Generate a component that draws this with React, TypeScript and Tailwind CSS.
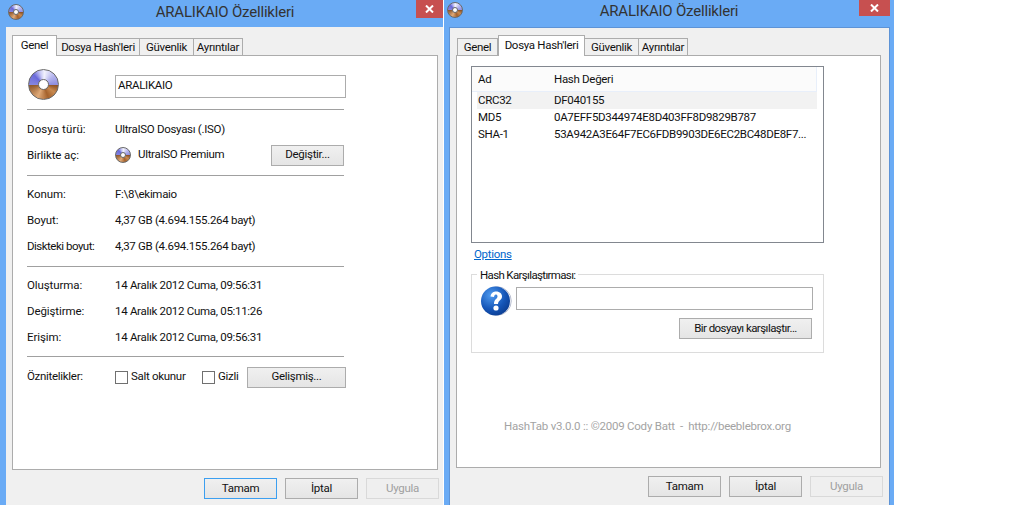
import React from "react";

function Disc({ size }: { size: number }) {
  const hole = Math.round(size * 0.36);
  return (
    <div
      className="rounded-full flex items-center justify-center shrink-0 border border-[#6a6a6a] bg-[conic-gradient(from_-90deg,#8585e0_0deg,#6a6ada_45deg,#c9c9f5_75deg,#f2f2fd_95deg,#b4b4ee_140deg,#8f8fe0_180deg,#8a4f22_182deg,#c98a50_215deg,#a5622c_250deg,#e0aa78_295deg,#8a5428_360deg)]"
      style={{ width: size, height: size }}
    >
      <div className="rounded-full bg-white border border-[#666]" style={{ width: hole, height: hole }} />
    </div>
  );
}

function CloseGlyph() {
  return (
    <svg width="9" height="8" viewBox="0 0 9 8">
      <path d="M1 0.5 L8 7.5 M8 0.5 L1 7.5" stroke="#fff" strokeWidth="2" />
    </svg>
  );
}

function Tab({ w, active, children }: { w: number; active?: boolean; children: React.ReactNode }) {
  return active ? (
    <div
      className="h-[21px] bg-white border border-b-0 border-[#acacac] flex items-center justify-center relative z-10 -mb-px shrink-0 whitespace-nowrap"
      style={{ width: w }}
    >
      {children}
    </div>
  ) : (
    <div
      className="h-[18px] mt-[3px] bg-[#f0f0f0] border border-[#acacac] -ml-px flex items-center justify-center shrink-0 whitespace-nowrap pt-px"
      style={{ width: w }}
    >
      {children}
    </div>
  );
}

function Btn({ w, children, variant }: { w: number; children: React.ReactNode; variant?: "focus" | "off" }) {
  const cls =
    variant === "focus"
      ? "border-[#3c9ff0] bg-gradient-to-b from-[#f0f0f0] to-[#e5e5e5]"
      : variant === "off"
      ? "border-[#d9d9d9] bg-[#efefef] text-[#a0a0a0]"
      : "border-[#acacac] bg-gradient-to-b from-[#f0f0f0] to-[#e5e5e5]";
  return (
    <div className={`h-[21px] border flex items-center justify-center shrink-0 whitespace-nowrap ${cls}`} style={{ width: w }}>
      {children}
    </div>
  );
}

function Hr({ mt }: { mt: string }) {
  return <div className={`h-px w-[317px] bg-[#a0a0a0] ${mt}`} />;
}

function Row({ label, children, mt, labelCls }: { label: string; children: React.ReactNode; mt?: string; labelCls?: string }) {
  return (
    <div className={`h-[26px] flex items-center whitespace-nowrap ${mt ?? ""}`}>
      <div className={`w-[88px] shrink-0 ${labelCls ?? "pt-px tracking-[-0.1px]"}`}>{label}</div>
      {children}
    </div>
  );
}

function Checkbox() {
  return <div className="w-[13px] h-[13px] border border-[#707070] bg-white shrink-0" />;
}

function Question() {
  return (
    <svg width="31" height="30" viewBox="0 0 31 30" className="shrink-0">
      <defs>
        <radialGradient id="q" cx="0.35" cy="0.3" r="0.8">
          <stop offset="0" stopColor="#4f9bf0" />
          <stop offset="0.6" stopColor="#1556b8" />
          <stop offset="1" stopColor="#0a3a8c" />
        </radialGradient>
      </defs>
      <circle cx="16" cy="15" r="14.3" fill="#f4f6fa" stroke="#b9bfd0" />
      <circle cx="14.5" cy="15" r="14.5" fill="url(#q)" />
      <path
        d="M9.5 10.5 C10 6.5 13 5.5 15 5.5 C19 5.5 21 8 21 10.5 C21 14 17 14.5 17 18 H13 C13 13 16.5 13 16.5 10.5 C16.5 9 15.5 8.5 14.8 8.5 C13.8 8.5 13.2 9.5 13 11 Z"
        fill="#fff"
      />
      <circle cx="15" cy="22" r="2.6" fill="#fff" />
    </svg>
  );
}

function GeneralPanel() {
  return (
    <div className="h-[415px] mr-[5px] bg-white border border-[#acacac] pl-[14px] pt-[13px]">
      <div className="h-[31px] flex">
        <div className="w-[88px] pl-px shrink-0">
          <Disc size={31} />
        </div>
        <div className="w-[231px] h-[23px] mt-[6px] border border-[#acacac] flex items-center pl-[2px] pb-[2px]">ARALIKAIO</div>
      </div>
      <Hr mt="mt-[9px]" />
      <Row label="Dosya türü:" mt="mt-[6px]" labelCls="pt-px tracking-[0.1px]">
        <span className="pt-px">UltraISO Dosyası (.ISO)</span>
      </Row>
      <Row label="Birlikte aç:">
        <div className="flex items-center gap-[7px] w-[156px]">
          <Disc size={16} />
          <span>UltraISO Premium</span>
        </div>
        <Btn w={73}>Değiştir...</Btn>
      </Row>
      <Hr mt="mt-[7px]" />
      <Row label="Konum:" mt="mt-[5px]">
        <span className="pt-px">F:\8\ekimaio</span>
      </Row>
      <Row label="Boyut:">
        <span className="pt-px">4,37 GB (4.694.155.264 bayt)</span>
      </Row>
      <Row label="Diskteki boyut:" labelCls="pt-px tracking-[-0.5px]">
        <span className="pt-px">4,37 GB (4.694.155.264 bayt)</span>
      </Row>
      <Hr mt="mt-[7px]" />
      <Row label="Oluşturma:" mt="mt-[5px]">
        <span className="pt-px">14 Aralık 2012 Cuma, 09:56:31</span>
      </Row>
      <Row label="Değiştirme:">
        <span className="pt-px">14 Aralık 2012 Cuma, 05:11:26</span>
      </Row>
      <Row label="Erişim:">
        <span className="pt-px">14 Aralık 2012 Cuma, 09:56:31</span>
      </Row>
      <Hr mt="mt-[6px]" />
      <Row label="Öznitelikler:" mt="mt-[7px]" labelCls="pb-px tracking-[-0.3px]">
        <Checkbox />
        <span className="ml-[3px] w-[71px]">Salt okunur</span>
        <Checkbox />
        <span className="ml-[3px] w-[29px]">Gizli</span>
        <Btn w={99}>Gelişmiş...</Btn>
      </Row>
    </div>
  );
}

function HashPanel() {
  return (
    <div className="h-[413px] bg-white border border-[#acacac] pl-[14px] pt-[10px]">
      <div className="w-[353px] h-[177px] border border-[#82878f] whitespace-nowrap">
        <div className="h-[25px] mr-[6px] bg-[#fbfbfb] border-b border-r border-[#e8effa] flex items-center pl-[6px] pt-[2px]">
          <span className="w-[76px] shrink-0">Ad</span>
          <span>Hash Değeri</span>
        </div>
        <div className="h-[17px] ml-[5px] mr-[6px] bg-[#f2f2f2] flex items-center pl-px pt-px">
          <span className="w-[76px] shrink-0">CRC32</span>
          <span>DF040155</span>
        </div>
        <div className="h-[17px] flex items-center pl-[6px] pt-px">
          <span className="w-[76px] shrink-0">MD5</span>
          <span>0A7EFF5D344974E8D403FF8D9829B787</span>
        </div>
        <div className="h-[17px] flex items-center pl-[6px] pt-px">
          <span className="w-[76px] shrink-0">SHA-1</span>
          <span>53A942A3E64F7EC6FDB9903DE6EC2BC48DE8F7...</span>
        </div>
      </div>
      <div className="mt-[3px] ml-[3px] h-[16px] leading-[16px] text-[#0066cc] underline">Options</div>
      <div className="mt-[12px] w-[353px] h-[79px] border border-[#dcdcdc] relative pt-[11px] pl-[9px]">
        <span className="absolute left-[5px] -top-[7px] bg-white px-[3px] leading-[14px] whitespace-nowrap tracking-[-0.65px]">Hash Karşılaştırması:</span>
        <div className="flex">
          <Question />
          <div className="ml-[4px] mt-px w-[297px] h-[23px] border border-[#acacac]" />
        </div>
        <div className="flex justify-end pr-[11px] mt-[2px] tracking-[-0.55px]">
          <Btn w={133}>Bir dosyayı karşılaştır...</Btn>
        </div>
      </div>
      <div className="mt-[65px] w-[353px] pl-[33px] text-[#a3a3a3] whitespace-nowrap tracking-[-0.23px]">
        HashTab v3.0.0 :: ©2009 Cody Batt &nbsp;-&nbsp; http://beeblebrox.org
      </div>
    </div>
  );
}

export default function App() {
  return (
    <div className="w-[1025px] h-[509px] bg-white overflow-hidden font-['Roboto','Noto_Sans',sans-serif] text-[11.5px] tracking-[-0.3px] text-[#111]">
      <div className="flex h-[505px] items-stretch gap-px">
        <div className="w-[443px] bg-[#6aabf5] flex flex-col pl-[6px]">
          <div className="h-[27px] flex items-start shrink-0">
            <div className="mt-[4px] ml-[2px]">
              <Disc size={16} />
            </div>
            <div className="flex-1 text-center text-[15px] leading-[25px] tracking-[-0.2px] text-[#333] pl-[10px]">ARALIKAIO Özellikleri</div>
            <div className="w-[27px] h-[18px] bg-[#c75050] flex items-center justify-center">
              <CloseGlyph />
            </div>
          </div>
          <div className="flex-1 bg-[#f0f0f0] pl-[6px] pt-[8px]">
            <div className="flex h-[21px]">
              <Tab w={45} active>Genel</Tab>
              <Tab w={84}>Dosya Hash'leri</Tab>
              <Tab w={55}>Güvenlik</Tab>
              <Tab w={50}>Ayrıntılar</Tab>
            </div>
            <div className="-mt-px">
              <GeneralPanel />
            </div>
            <div className="flex justify-end gap-[8px] mt-[8px] pr-[4px]">
              <Btn w={73} variant="focus">Tamam</Btn>
              <Btn w={73}>İptal</Btn>
              <Btn w={73} variant="off">Uygula</Btn>
            </div>
          </div>
        </div>
        <div className="w-[450px] bg-[#6aabf5] flex flex-col pl-[5px] pr-[4px]">
          <div className="h-[27px] flex items-start shrink-0">
            <div className="mt-[2px] -ml-[2px]">
              <Disc size={16} />
            </div>
            <div className="flex-1 text-center text-[15px] leading-[22px] tracking-[-0.2px] text-[#333] pl-[16px]">ARALIKAIO Özellikleri</div>
            <div className="w-[31px] h-[16px] bg-[#c75050] flex items-center justify-center">
              <CloseGlyph />
            </div>
          </div>
          <div className="flex-1 bg-[#f0f0f0] border-t border-l border-r border-[#5d93d6] pl-[6px] pt-[7px] pr-[8px]">
            <div className="flex h-[21px] pl-[2px]">
              <Tab w={41}>Genel</Tab>
              <Tab w={87} active>Dosya Hash'leri</Tab>
              <Tab w={55}>Güvenlik</Tab>
              <Tab w={50}>Ayrıntılar</Tab>
            </div>
            <div className="-mt-px">
              <HashPanel />
            </div>
            <div className="flex justify-end gap-[8px] mt-[8px] -mr-[2px]">
              <Btn w={73}>Tamam</Btn>
              <Btn w={73}>İptal</Btn>
              <Btn w={73} variant="off">Uygula</Btn>
            </div>
          </div>
        </div>
      </div>
    </div>
  );
}
